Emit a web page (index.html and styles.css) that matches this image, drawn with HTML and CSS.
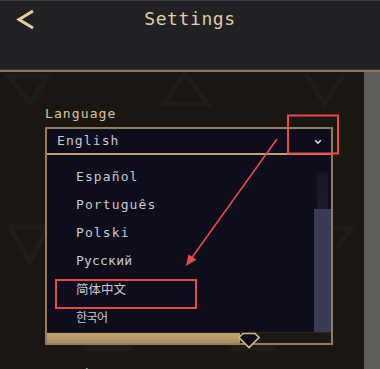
FILE: index.html
```html
<!DOCTYPE html>
<html lang="en">
<head>
<meta charset="utf-8">
<title>Settings</title>
<link rel="stylesheet" href="styles.css">
</head>
<body>
<header class="header">
  <div class="header-left">
    <svg class="back" width="20" height="22" viewBox="0 0 20 22" aria-hidden="true">
      <polyline points="17,2 3,10.5 17,19" fill="none" stroke="#e3cf9b" stroke-width="3"/>
    </svg>
  </div>
  <h1 class="title">Settings</h1>
  <div class="header-right"></div>
</header>
<main class="main">
  <section class="content">
    <svg class="watermark" width="364" height="297" viewBox="0 72 364 297" aria-hidden="true">
      <g fill="none" stroke="#201c17" stroke-width="5">
        <path d="M8 76 H48 L30 103 Z"/>
        <path d="M163 104 L185 74 L208 104 Z"/>
        <path d="M306 74 L325 104 L344 74"/>
        <path d="M10 227 H48 L30 262 Z"/>
        <path d="M330 228 H352 L338 247"/>
        <path d="M85 348 L107 318 L130 348 Z"/>
        <path d="M233 348 L253 318 L273 348 Z"/>
      </g>
    </svg>
    <div class="label">Language</div>
    <div class="combo">
      <div class="select">
        <span class="select-value">English</span>
        <svg class="chevron" width="8" height="6" viewBox="0 0 8 6" aria-hidden="true">
          <polyline points="1.2,1.2 4,4.2 6.8,1.2" fill="none" stroke="#e6e6ee" stroke-width="1.4"/>
        </svg>
      </div>
      <div class="list">
        <ul class="items">
          <li class="item">Español</li>
          <li class="item">Português</li>
          <li class="item">Polski</li>
          <li class="item item-cyr">Русский</li>
          <li class="item item-cjk">简体中文</li>
          <li class="item item-kr">한국어</li>
        </ul>
        <div class="scrollbar">
          <div class="scroll-cap"></div>
          <div class="scroll-thumb"></div>
        </div>
      </div>
      <div class="slider">
        <div class="slider-fill" style="width:193px"></div>
        <svg class="knob" width="22" height="17" viewBox="0 0 22 17" aria-hidden="true">
          <polygon points="5,1.5 17,1.5 21,5.5 11,15.5 1,5.5" fill="#0e0d1b" stroke="#d2b784" stroke-width="1.6"/>
        </svg>
      </div>
    </div>
    <div class="label label-next">Sound</div>
  </section>
  <div class="rail"></div>
</main>
<svg class="annot" width="380" height="369" viewBox="0 0 380 369" aria-hidden="true">
  <g fill="none" stroke="#e8494b" stroke-width="2">
    <rect x="288" y="115.5" width="50" height="38"/>
    <rect x="56" y="280" width="140" height="28"/>
    <line x1="277" y1="139" x2="192" y2="257.5" stroke-width="1.6"/>
  </g>
  <polygon points="186,266 196.5,259.8 188.5,254.2" fill="#e8494b"/>
</svg>
</body>
</html>
```

FILE: styles.css
```css
* { box-sizing: border-box; }
html, body {
  margin: 0;
  padding: 0;
}
body {
  width: 380px;
  height: 369px;
  overflow: hidden;
  position: relative;
  background: #1a1713;
  font-family: "DejaVu Sans Mono", "Noto Sans CJK SC", monospace;
}
.header {
  height: 70px;
  background: #212025;
  border-top: 1px solid #403f44;
  border-bottom: 1px solid #393631;
  display: grid;
  grid-template-columns: 1fr auto 1fr;
  align-items: start;
  padding-top: 7px;
}
.header-left {
  padding-left: 16px;
  padding-top: 1px;
}
.back { display: block; }
.title {
  margin: 0;
  font-size: 18px;
  line-height: 22px;
  font-weight: normal;
  letter-spacing: 0.6px;
  color: #e0cf9f;
}
.main {
  display: flex;
  height: 299px;
  border-top: 2px solid #8f7651;
}
.content {
  position: relative;
  z-index: 0;
  width: 364px;
  background: #1a1713;
  padding: 34px 0 0 45px;
}
.watermark {
  position: absolute;
  left: 0;
  top: 0;
  z-index: -1;
}
.rail {
  flex: 1;
  background: #5f5e5a;
}
.label {
  font-size: 13px;
  line-height: 16px;
  letter-spacing: 1.1px;
  color: #dcc793;
  margin-bottom: 5px;
}
.label-next {
  margin-top: 21px;
}
.combo {
  position: relative;
  width: 288px;
  border: 2px solid #947d5c;
  background: #0e0d1b;
}
.select {
  height: 26px;
  border-bottom: 2px solid #bca174;
  display: flex;
  align-items: center;
  justify-content: space-between;
  padding: 0 9px 0 10px;
}
.select-value {
  font-size: 13px;
  line-height: 24px;
  letter-spacing: 1.1px;
  color: #c8c9d5;
}
.chevron {
  display: block;
  margin-top: 1px;
}
.list {
  height: 177px;
  display: flex;
  background: #0e0d1b;
}
.items {
  list-style: none;
  margin: 0;
  padding: 8px 0 0 0;
  flex: 1;
}
.item {
  height: 28px;
  line-height: 28px;
  padding-left: 29px;
  font-size: 13px;
  letter-spacing: 1.1px;
  color: #c9c9d0;
}
.item-cyr {
  letter-spacing: 0.2px;
}
.item-cjk {
  font-family: "Noto Sans CJK SC", sans-serif;
  font-size: 12.5px;
  letter-spacing: 0;
}
.item-kr {
  font-family: "Noto Sans CJK KR", sans-serif;
  font-size: 12px;
  letter-spacing: -0.5px;
}
.scrollbar {
  width: 17px;
  display: flex;
  flex-direction: column;
  padding-top: 12px;
}
.scroll-cap {
  height: 42px;
  width: 11px;
  margin: 0 auto;
  border-radius: 6px 6px 0 0;
  background: linear-gradient(#05050a, #181826 20%, #1a1a28);
}
.scroll-thumb {
  flex: 1;
  background: #3b3a55;
}
.slider {
  position: relative;
  height: 11px;
  border-top: 1px solid #2a2419;
  background: #1c1813;
}
.slider-fill {
  height: 100%;
  background: linear-gradient(#c2a472, #aa8c5d);
}
.knob {
  position: absolute;
  left: 191px;
  top: -1px;
}
.annot {
  position: absolute;
  left: 0;
  top: 0;
  pointer-events: none;
}
```
